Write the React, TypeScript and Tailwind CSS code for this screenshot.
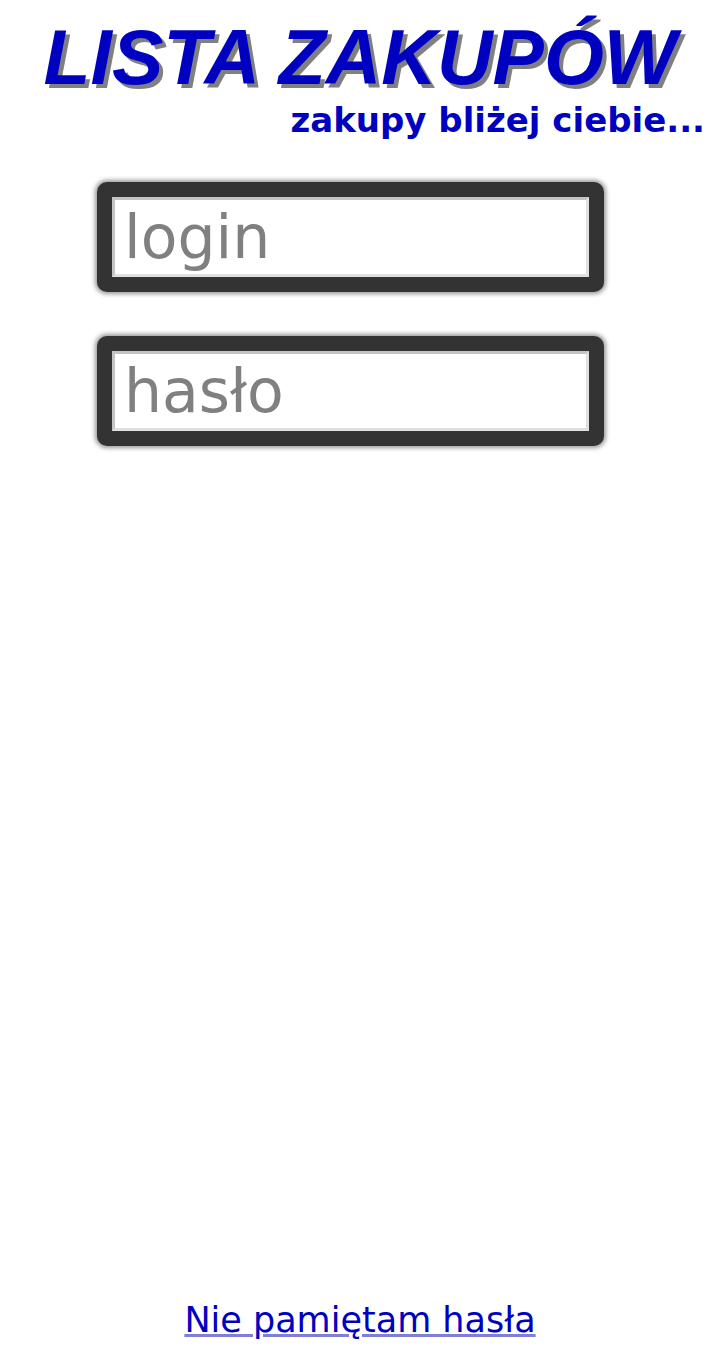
import React from "react";

function Field({ placeholder, type }: { placeholder: string; type: string }) {
  return (
    <div className="ml-[97px] w-[507px] h-[110px] rounded-[10px] bg-[#333333] p-[15px] shadow-[0_0_4px_2px_rgba(51,51,51,0.5)]">
      <input
        type={type}
        placeholder={placeholder}
        className="block w-full h-full bg-white border-[3px] border-t-[#c4c4c4] border-l-[#c4c4c4] border-r-[#e0e0e0] border-b-[#e0e0e0] pl-[9px] pr-2 text-[60px] leading-none text-[#333] placeholder:text-[#808080] outline-none font-['DejaVu_Sans',sans-serif]"
      />
    </div>
  );
}

export default function App() {
  return (
    <div className="h-[1366px] bg-white flex flex-col font-['DejaVu_Sans',sans-serif]">
      <h1 className="mt-[14px] text-center text-[77px] leading-[86px] font-bold italic text-[#0000c0] font-['Liberation_Sans',Arial,sans-serif] [text-shadow:4px_4px_0_#808080]">
        LISTA ZAKUPÓW
      </h1>
      <p className="text-right pr-[15px] text-[34px] leading-[40px] font-bold text-[#0000c0]">
        zakupy bliżej ciebie...
      </p>
      <div className="mt-[42px] flex flex-col gap-[44px]">
        <Field placeholder="login" type="text" />
        <Field placeholder="hasło" type="password" />
      </div>
      <div className="flex-1" />
      <div className="text-center pb-[25px]">
        <a
          href="#"
          className="text-[35px] leading-[42px] text-[#0000c0] underline decoration-[#7f7fd8] underline-offset-[2px]"
        >
          Nie pamiętam hasła
        </a>
      </div>
    </div>
  );
}
